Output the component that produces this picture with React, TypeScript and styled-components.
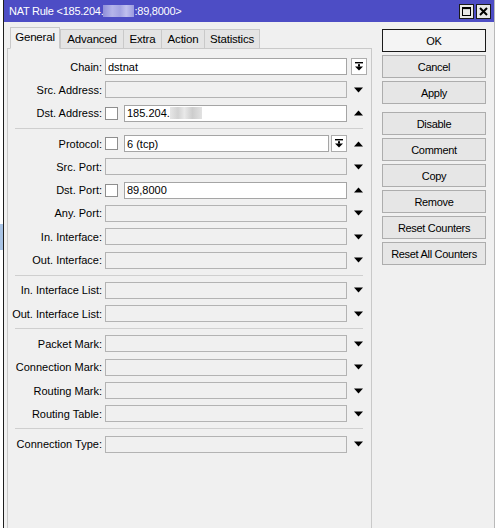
import React from "react";
import styled, { createGlobalStyle } from "styled-components";

const Global = createGlobalStyle`
  html, body { margin: 0; padding: 0; }
  body {
    width: 495px;
    height: 528px;
    overflow: hidden;
    background: #ffffff;
    font-family: "Liberation Sans", Arial, sans-serif;
    font-size: 11px;
    color: #000;
  }
`;

const Screen = styled.div`
  display: flex;
  width: 495px;
  height: 528px;
  overflow: hidden;
`;

const Backdrop = styled.div`
  width: 3px;
  flex: none;
  background: linear-gradient(
    to bottom,
    #ffffff 0px,
    #ffffff 224px,
    #a9c4e6 224px,
    #a9c4e6 250px,
    #ffffff 250px
  );
`;

const Window = styled.div`
  flex: 1;
  display: flex;
  flex-direction: column;
  border-left: 1px solid #1e1e1e;
  border-right: 1px solid #b9b9b9;
  background: #f0f0f0;
`;

const TitleBar = styled.div`
  height: 22px;
  flex: none;
  background: #4d4dc5;
  display: flex;
  align-items: center;
  justify-content: space-between;
  padding: 0 3px 0 5px;
`;

const TitleText = styled.div`
  color: #ffffff;
  font-size: 11px;
  letter-spacing: -0.25px;
  display: flex;
  align-items: center;
  white-space: nowrap;
`;

const Blur = styled.span<{ $w: number; $tone: "title" | "field" }>`
  display: inline-block;
  width: ${(p) => p.$w}px;
  height: 12px;
  background: ${(p) =>
    p.$tone === "title"
      ? "linear-gradient(90deg, #8f8fd9 0%, #b4b4ea 30%, #a2a2e2 55%, #c0c0ee 75%, #9a9adf 100%)"
      : "linear-gradient(90deg, #e6e6e6 0%, #d2d2d2 25%, #e9e9e9 45%, #cdcdcd 70%, #e2e2e2 100%)"};
`;

const TitleButtons = styled.div`
  display: flex;
  gap: 2px;
`;

const TitleButton = styled.div`
  width: 13px;
  height: 13px;
  border: 1px solid #1a1a1a;
  background: #e8e8e8;
  display: flex;
  align-items: center;
  justify-content: center;
`;

const Body = styled.div`
  flex: 1;
  display: flex;
  padding: 5px 7px 0 3px;
  gap: 10px;
  min-height: 0;
`;

const LeftPane = styled.div`
  width: 365px;
  flex: none;
  display: flex;
  flex-direction: column;
`;

const TabStrip = styled.div`
  display: flex;
  align-items: flex-end;
  height: 22px;
  padding-left: 3px;
  margin-bottom: -1px;
  position: relative;
  z-index: 1;
`;

const Tab = styled.div<{ $active?: boolean; $w: number }>`
  width: ${(p) => p.$w}px;
  height: ${(p) => (p.$active ? 22 : 20)}px;
  box-sizing: border-box;
  border: 1px solid #c9c9c9;
  border-bottom: ${(p) => (p.$active ? "1px solid #f0f0f0" : "1px solid #c9c9c9")};
  margin-right: ${(p) => (p.$active ? 0 : -1)}px;
  background: ${(p) => (p.$active ? "#f0f0f0" : "#e4e4e4")};
  display: flex;
  align-items: center;
  justify-content: center;
  font-size: 11.5px;
  letter-spacing: -0.2px;
  padding-bottom: ${(p) => (p.$active ? 2 : 0)}px;
`;

const Panel = styled.div`
  flex: 1;
  border: 1px solid #c9c9c9;
  border-bottom: none;
  padding: 6px 8px 0 0;
`;

const Row = styled.div`
  display: grid;
  grid-template-columns: 94px 242px 16px;
  column-gap: 3px;
  height: 23.3px;
  align-items: center;
`;

const Label = styled.div`
  text-align: right;
  white-space: nowrap;
`;

const Field = styled.div`
  display: flex;
  align-items: center;
  gap: 6px;
  height: 17px;
`;

const TextBox = styled.div<{ $filled?: boolean }>`
  flex: 1;
  height: 17px;
  box-sizing: border-box;
  border: 1px solid ${(p) => (p.$filled ? "#a5a5a5" : "#b3b3b3")};
  background: ${(p) => (p.$filled ? "#ffffff" : "#f0f0f0")};
  display: flex;
  align-items: center;
  padding-left: 2px;
  white-space: nowrap;
  overflow: hidden;
`;

const CheckBox = styled.div`
  width: 13px;
  height: 13px;
  box-sizing: border-box;
  flex: none;
  border: 1px solid #8e8e8e;
  background: #ffffff;
`;

const ComboButton = styled.div<{ $inline?: boolean }>`
  width: 16px;
  height: 17px;
  box-sizing: border-box;
  flex: none;
  border: 1px solid #adadad;
  background: #ffffff;
  margin-left: ${(p) => (p.$inline ? -4 : 1)}px;
  display: flex;
  align-items: center;
  justify-content: center;
`;

const Trailing = styled.div`
  display: flex;
  align-items: center;
  justify-content: center;
  height: 17px;
`;

const Separator = styled.div`
  height: 1px;
  background: #cfcfcf;
  margin: 3px 0 3px 7px;
`;

const ButtonColumn = styled.div`
  width: 104px;
  flex: none;
  display: flex;
  flex-direction: column;
  gap: 3px;
  padding-top: 2px;
`;

const ActionButton = styled.div<{ $default?: boolean; $gapBefore?: boolean }>`
  height: 23px;
  box-sizing: border-box;
  border: 1px solid ${(p) => (p.$default ? "#1a1a1a" : "#adadad")};
  background: ${(p) => (p.$default ? "#f4f4f4" : "#e6e6e6")};
  display: flex;
  align-items: center;
  justify-content: center;
  font-size: 11px;
  letter-spacing: -0.3px;
  margin-top: ${(p) => (p.$gapBefore ? 5 : 0)}px;
`;

const DownArrow = () => (
  <svg width="9" height="6" viewBox="0 0 9 6">
    <polygon points="0,0.5 9,0.5 4.5,5.5" fill="#000" />
  </svg>
);

const UpArrow = () => (
  <svg width="9" height="6" viewBox="0 0 9 6">
    <polygon points="0,5.5 9,5.5 4.5,0.5" fill="#000" />
  </svg>
);

const ComboIcon = () => (
  <svg width="8" height="9" viewBox="0 0 8 9">
    <rect x="0" y="0" width="8" height="1.4" fill="#000" />
    <rect x="3" y="2.2" width="2" height="2.4" fill="#000" />
    <polygon points="0,4.4 8,4.4 4,8.6" fill="#000" />
  </svg>
);

const MaxIcon = () => (
  <svg width="9" height="9" viewBox="0 0 9 9">
    <rect x="0.5" y="0.5" width="8" height="8" fill="none" stroke="#000" strokeWidth="1" />
    <rect x="0.5" y="0.5" width="8" height="1.6" fill="#000" />
  </svg>
);

const CloseIcon = () => (
  <svg width="9" height="9" viewBox="0 0 9 9">
    <path d="M1 1 L8 8 M8 1 L1 8" stroke="#000" strokeWidth="2" />
  </svg>
);

type RowDef = {
  label: string;
  value?: string;
  check?: boolean;
  blur?: boolean;
  combo?: "trailing" | "inline";
  arrow?: "up" | "down";
};

const groups: RowDef[][] = [
  [
    { label: "Chain:", value: "dstnat", combo: "trailing" },
    { label: "Src. Address:", arrow: "down" },
    { label: "Dst. Address:", check: true, value: "185.204.", blur: true, arrow: "up" },
  ],
  [
    { label: "Protocol:", check: true, value: "6 (tcp)", combo: "inline", arrow: "up" },
    { label: "Src. Port:", arrow: "down" },
    { label: "Dst. Port:", check: true, value: "89,8000", arrow: "up" },
    { label: "Any. Port:", arrow: "down" },
    { label: "In. Interface:", arrow: "down" },
    { label: "Out. Interface:", arrow: "down" },
  ],
  [
    { label: "In. Interface List:", arrow: "down" },
    { label: "Out. Interface List:", arrow: "down" },
  ],
  [
    { label: "Packet Mark:", arrow: "down" },
    { label: "Connection Mark:", arrow: "down" },
    { label: "Routing Mark:", arrow: "down" },
    { label: "Routing Table:", arrow: "down" },
  ],
  [{ label: "Connection Type:", arrow: "down" }],
];

const tabs = [
  { name: "General", w: 50, active: true },
  { name: "Advanced", w: 64 },
  { name: "Extra", w: 39 },
  { name: "Action", w: 44 },
  { name: "Statistics", w: 56 },
];

const buttons = [
  { name: "OK", def: true },
  { name: "Cancel" },
  { name: "Apply" },
  { name: "Disable", gap: true },
  { name: "Comment" },
  { name: "Copy" },
  { name: "Remove" },
  { name: "Reset Counters" },
  { name: "Reset All Counters" },
];

const FormRow = ({ r }: { r: RowDef }) => (
  <Row>
    <Label>{r.label}</Label>
    <Field>
      {r.check && <CheckBox />}
      <TextBox $filled={r.value !== undefined}>
        {r.value}
        {r.blur && <Blur $w={32} $tone="field" />}
      </TextBox>
      {r.combo === "inline" && (
        <ComboButton $inline>
          <ComboIcon />
        </ComboButton>
      )}
    </Field>
    <Trailing>
      {r.combo === "trailing" ? (
        <ComboButton>
          <ComboIcon />
        </ComboButton>
      ) : r.arrow === "up" ? (
        <UpArrow />
      ) : r.arrow === "down" ? (
        <DownArrow />
      ) : null}
    </Trailing>
  </Row>
);

export default function App() {
  return (
    <>
      <Global />
      <Screen>
        <Backdrop />
        <Window>
          <TitleBar>
            <TitleText>
              NAT Rule &lt;185.204.
              <Blur $w={31} $tone="title" />
              :89,8000&gt;
            </TitleText>
            <TitleButtons>
              <TitleButton>
                <MaxIcon />
              </TitleButton>
              <TitleButton>
                <CloseIcon />
              </TitleButton>
            </TitleButtons>
          </TitleBar>
          <Body>
            <LeftPane>
              <TabStrip>
                {tabs.map((t) => (
                  <Tab key={t.name} $active={t.active} $w={t.w}>
                    {t.name}
                  </Tab>
                ))}
              </TabStrip>
              <Panel>
                {groups.map((g, gi) => (
                  <React.Fragment key={gi}>
                    {gi > 0 && <Separator />}
                    {g.map((r) => (
                      <FormRow key={r.label} r={r} />
                    ))}
                  </React.Fragment>
                ))}
              </Panel>
            </LeftPane>
            <ButtonColumn>
              {buttons.map((b) => (
                <ActionButton key={b.name} $default={b.def} $gapBefore={b.gap}>
                  {b.name}
                </ActionButton>
              ))}
            </ButtonColumn>
          </Body>
        </Window>
      </Screen>
    </>
  );
}
